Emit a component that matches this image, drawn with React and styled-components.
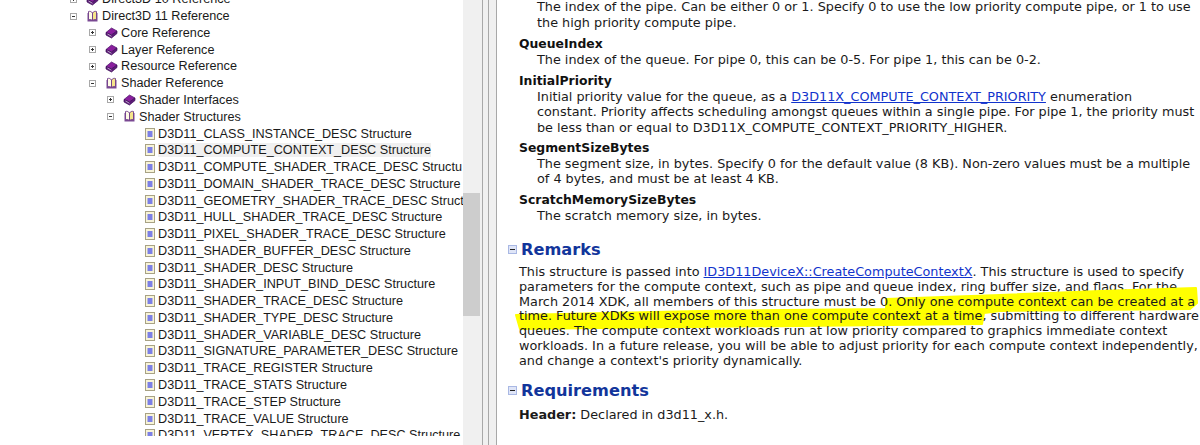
import React from "react";
import styled, { createGlobalStyle } from "styled-components";

const Global = createGlobalStyle`
  html, body { margin: 0; padding: 0; background: #fff; overflow: hidden; }
  body { font-family: "DejaVu Sans", sans-serif; }
`;

const Page = styled.div`
  width: 1200px;
  height: 445px;
  display: flex;
  overflow: hidden;
  background: #fff;
`;

const TreePane = styled.div`
  width: 463px;
  height: 445px;
  overflow: hidden;
  flex: none;
  margin-top: -9px;
`;

const TreeRow = styled.div`
  height: 16.78px;
  display: flex;
  align-items: center;
  padding-left: ${(p) => p.$indent}px;
  font-family: "Liberation Sans", Arial, sans-serif;
  font-size: 12.65px;
  color: #1a1a1a;
  white-space: nowrap;
`;

const Toggle = styled.span`
  box-sizing: border-box;
  width: 7px;
  height: 7px;
  border: 1px solid #a8a8a8;
  flex: none;
  position: relative;
  margin-right: 9px;
  &::before {
    content: "";
    position: absolute;
    left: 1px;
    right: 1px;
    top: 2px;
    height: 1px;
    background: #333;
  }
  &::after {
    content: "";
    display: ${(p) => (p.$open ? "none" : "block")};
    position: absolute;
    top: 1px;
    bottom: 1px;
    left: 2px;
    width: 1px;
    background: #333;
  }
`;

const RowLabel = styled.span`
  margin-left: 3px;
  background: ${(p) => (p.$selected ? "#f0f0f0" : "transparent")};
`;

const Scrollbar = styled.div`
  width: 19px;
  flex: none;
  background: #f0f0f0;
  padding-top: 193px;
`;

const Thumb = styled.div`
  width: 17px;
  height: 123px;
  background: #cdcdcd;
`;

const Splitter = styled.div`
  width: 15px;
  flex: none;
  background: #f0f0f0;
  border-left: 1px solid #a8a8a8;
  border-right: 1px solid #a8a8a8;
  box-sizing: border-box;
  &::before {
    content: "";
    display: block;
    width: 1px;
    height: 100%;
    margin-left: 5px;
    background: #a8a8a8;
  }
`;

const Article = styled.div`
  flex: 1;
  min-width: 0;
  position: relative;
  padding-left: 22px;
  font-size: 12.8px;
  color: #1a1a1a;
`;

const Block = styled.div`
  position: relative;
  line-height: ${(p) => p.$leading}px;
  margin-top: ${(p) => p.$top || 0}px;
`;

const Para = styled.div`
  position: relative;
  padding-left: ${(p) => p.$indent || 0}px;
  white-space: nowrap;
`;

const Term = styled.div`
  font-weight: bold;
  font-size: 12.4px;
  color: #111;
`;

const Heading = styled.div`
  display: flex;
  align-items: center;
  gap: 4px;
  margin-left: -11px;
  font-size: 16.2px;
  font-weight: bold;
  color: #12359b;
  line-height: 22px;
  margin-top: ${(p) => p.$top}px;
`;

const Collapse = styled.span`
  box-sizing: border-box;
  width: 9px;
  height: 9px;
  border: 1px solid #a9b8e4;
  background: #dfe5f7;
  position: relative;
  &::before {
    content: "";
    position: absolute;
    left: 1px;
    right: 1px;
    top: 3px;
    height: 1px;
    background: #222;
  }
`;

const DocLink = styled.a`
  color: #1133cc;
  text-decoration: underline;
`;

const Marker = styled.svg`
  position: absolute;
  left: -19px;
  top: -12px;
  pointer-events: none;
`;

const HighlightedText = styled.div`
  position: relative;
`;

const Book = ({ open }) => (
  <svg width="13" height="13" viewBox="0 0 13 13" style={{ flex: "none" }}>
    {open ? (
      <g>
        <path d="M1.500 3v8.500h10V3z" fill="#7b4a94" />
        <path d="M2.500 1.500c1.500-.5 3 0 4 1.500v7.500c-1-.8-2.500-1.200-4-.8z" fill="#fffbe6" stroke="#6d3a8a" strokeWidth="0.900" />
        <path d="M10.500 1.500c-1.500-.5-3 0-4 1.500v7.500c1-.8 2.500-1.200 4-.8z" fill="#f5e58a" stroke="#6d3a8a" strokeWidth="0.900" />
      </g>
    ) : (
      <g>
        <path d="M1 6.500 6.500 2 12 5 6.500 9z" fill="#8a1f9e" stroke="#4a1468" strokeWidth="0.700" />
        <path d="M1 6.500v2.500l5.500 3L12 7.500V5L6.500 9z" fill="#5d1a78" stroke="#3c1058" strokeWidth="0.700" />
        <path d="M2.500 8 6.500 10.300" stroke="#e8dcef" strokeWidth="0.700" />
      </g>
    )}
  </svg>
);

const Doc = () => (
  <svg width="10" height="12" viewBox="0 0 10 12" style={{ flex: "none" }}>
    <rect x="0.500" y="0.500" width="9" height="11" fill="#f8f4d8" stroke="#a8a284" />
    <rect x="2.500" y="3" width="5" height="6" fill="#7c80e6" />
  </svg>
);

const folders = [
  ["Direct3D 10 Reference", 70, false, false],
  ["Direct3D 11 Reference", 70, true, true],
  ["Core Reference", 89, false, false],
  ["Layer Reference", 89, false, false],
  ["Resource Reference", 89, false, false],
  ["Shader Reference", 89, true, true],
  ["Shader Interfaces", 107, false, false],
  ["Shader Structures", 107, true, true],
];

const docs = [
  "D3D11_CLASS_INSTANCE_DESC Structure",
  "D3D11_COMPUTE_CONTEXT_DESC Structure",
  "D3D11_COMPUTE_SHADER_TRACE_DESC Structu",
  "D3D11_DOMAIN_SHADER_TRACE_DESC Structure",
  "D3D11_GEOMETRY_SHADER_TRACE_DESC Struct",
  "D3D11_HULL_SHADER_TRACE_DESC Structure",
  "D3D11_PIXEL_SHADER_TRACE_DESC Structure",
  "D3D11_SHADER_BUFFER_DESC Structure",
  "D3D11_SHADER_DESC Structure",
  "D3D11_SHADER_INPUT_BIND_DESC Structure",
  "D3D11_SHADER_TRACE_DESC Structure",
  "D3D11_SHADER_TYPE_DESC Structure",
  "D3D11_SHADER_VARIABLE_DESC Structure",
  "D3D11_SIGNATURE_PARAMETER_DESC Structure",
  "D3D11_TRACE_REGISTER Structure",
  "D3D11_TRACE_STATS Structure",
  "D3D11_TRACE_STEP Structure",
  "D3D11_TRACE_VALUE Structure",
  "D3D11_VERTEX_SHADER_TRACE_DESC Structure",
];

export default function App() {
  return (
    <Page>
      <Global />
      <TreePane>
        {folders.map(([label, indent, open, openBook]) => (
          <TreeRow key={label} $indent={indent}>
            <Toggle $open={open} />
            <Book open={openBook} />
            <RowLabel>{label}</RowLabel>
          </TreeRow>
        ))}
        {docs.map((label, i) => (
          <TreeRow key={label} $indent={145}>
            <Doc />
            <RowLabel $selected={i === 1}>{label}</RowLabel>
          </TreeRow>
        ))}
      </TreePane>
      <Scrollbar>
        <Thumb />
      </Scrollbar>
      <Splitter />
      <Article>
        <Block $leading={16} $top={-1}>
          <Para $indent={18}>The index of the pipe. Can be either 0 or 1. Specify 0 to use the low priority compute pipe, or 1 to use</Para>
          <Para $indent={18}>the high priority compute pipe.</Para>
        </Block>
        <Block $leading={16} $top={5}>
          <Term>QueueIndex</Term>
          <Para $indent={18}>The index of the queue. For pipe 0, this can be 0-5. For pipe 1, this can be 0-2.</Para>
        </Block>
        <Block $leading={15.7} $top={5}>
          <Term>InitialPriority</Term>
          <Para $indent={18}>Initial priority value for the queue, as a <DocLink>D3D11X_COMPUTE_CONTEXT_PRIORITY</DocLink> enumeration</Para>
          <Para $indent={18}>constant. Priority affects scheduling amongst queues within a single pipe. For pipe 1, the priority must</Para>
          <Para $indent={18}>be less than or equal to D3D11X_COMPUTE_CONTEXT_PRIORITY_HIGHER.</Para>
        </Block>
        <Block $leading={15.7} $top={4}>
          <Term>SegmentSizeBytes</Term>
          <Para $indent={18}>The segment size, in bytes. Specify 0 for the default value (8 KB). Non-zero values must be a multiple</Para>
          <Para $indent={18}>of 4 bytes, and must be at least 4 KB.</Para>
        </Block>
        <Block $leading={16} $top={5}>
          <Term>ScratchMemorySizeBytes</Term>
          <Para $indent={18}>The scratch memory size, in bytes.</Para>
        </Block>
        <Heading $top={15}><Collapse />Remarks</Heading>
        <Block $leading={14.8} $top={4}>
          <Para>This structure is passed into <DocLink>ID3D11DeviceX::CreateComputeContextX</DocLink>. This structure is used to specify</Para>
          <Para>parameters for the compute context, such as pipe and queue index, ring buffer size, and flags. For the</Para>
          <HighlightedText>
            <Marker width="700" height="50" viewBox="500 280 700 50">
              <path
                d="M516 312 L700 308 L886 306 L886 296 L1000 292 L1100 288 L1196 285 L1197 300 L1190 306 L1000 308 L984 310 L982 321 L800 323 L600 325 L520 326 z"
                fill="#ffff00"
                stroke="#ffff00"
                strokeWidth="2"
                strokeLinejoin="round"
              />
            </Marker>
            <Para>March 2014 XDK, all members of this structure must be 0. Only one compute context can be created at a</Para>
            <Para>time. Future XDKs will expose more than one compute context at a time, submitting to different hardware</Para>
          </HighlightedText>
          <Para>queues. The compute context workloads run at low priority compared to graphics immediate context</Para>
          <Para>workloads. In a future release, you will be able to adjust priority for each compute context independently,</Para>
          <Para>and change a context's priority dynamically.</Para>
        </Block>
        <Heading $top={11}><Collapse />Requirements</Heading>
        <Block $leading={16} $top={5}>
          <Para><b>Header:</b> Declared in d3d11_x.h.</Para>
        </Block>
      </Article>
    </Page>
  );
}
